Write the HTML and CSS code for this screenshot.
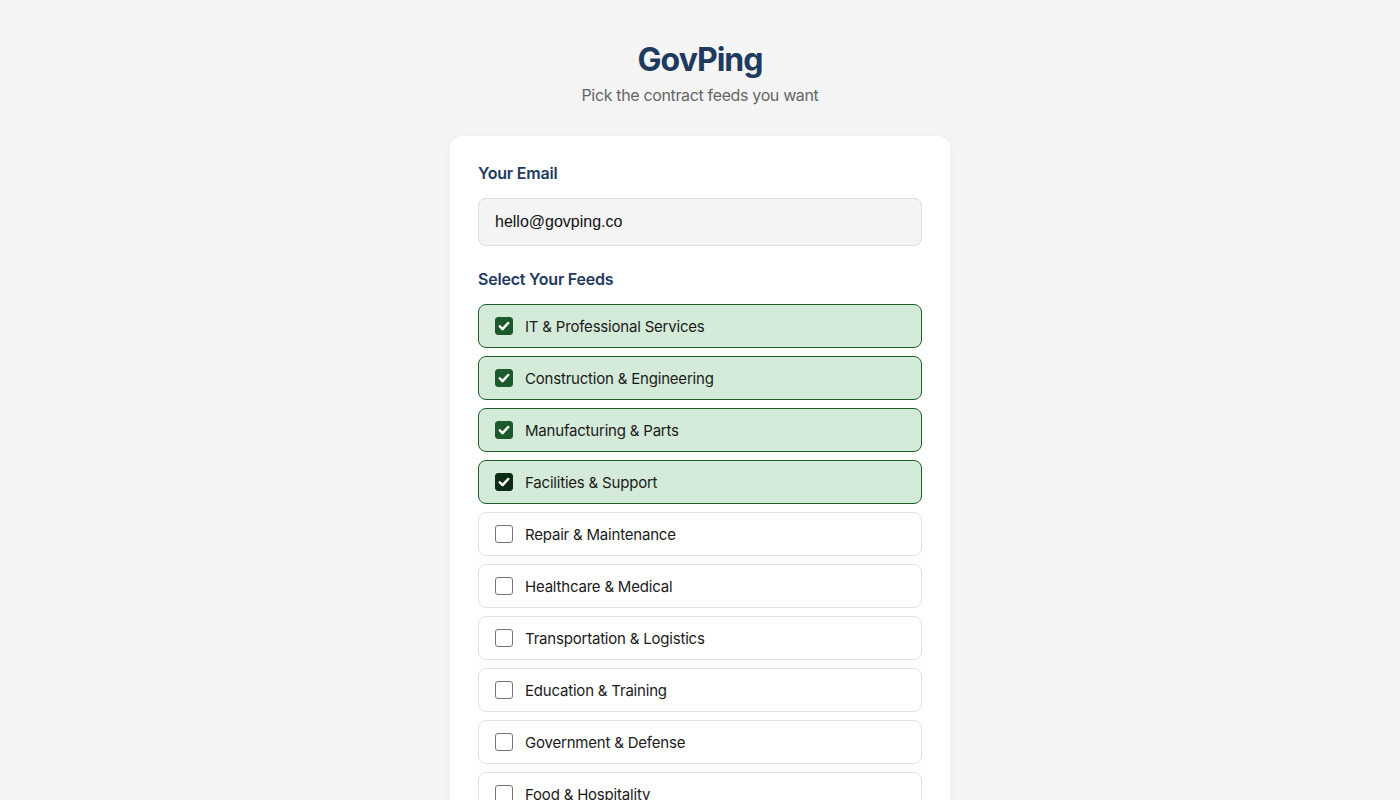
FILE: index.html
```html
<!DOCTYPE html>
<html lang="en">
<head>
<meta charset="utf-8">
<title>GovPing</title>
<link rel="stylesheet" href="styles.css">
</head>
<body>
<div class="page">
  <header class="hero">
    <h1 class="brand">GovPing</h1>
    <p class="tagline">Pick the contract feeds you want</p>
  </header>
  <main class="card">
    <label class="field-label" for="email">Your Email</label>
    <input class="email-input" id="email" type="email" value="hello@govping.co">
    <div class="field-label feeds-label">Select Your Feeds</div>
    <div class="feeds">
      <label class="feed checked"><span class="box"><svg viewBox="0 0 18 18"><path d="M4.3 9.4l3.1 3.1 6.3-6.9" fill="none" stroke="#fff" stroke-width="2.8" stroke-linecap="round" stroke-linejoin="round"/></svg></span><span class="feed-name">IT &amp; Professional Services</span></label>
      <label class="feed checked"><span class="box"><svg viewBox="0 0 18 18"><path d="M4.3 9.4l3.1 3.1 6.3-6.9" fill="none" stroke="#fff" stroke-width="2.8" stroke-linecap="round" stroke-linejoin="round"/></svg></span><span class="feed-name">Construction &amp; Engineering</span></label>
      <label class="feed checked"><span class="box"><svg viewBox="0 0 18 18"><path d="M4.3 9.4l3.1 3.1 6.3-6.9" fill="none" stroke="#fff" stroke-width="2.8" stroke-linecap="round" stroke-linejoin="round"/></svg></span><span class="feed-name">Manufacturing &amp; Parts</span></label>
      <label class="feed checked active"><span class="box"><svg viewBox="0 0 18 18"><path d="M4.3 9.4l3.1 3.1 6.3-6.9" fill="none" stroke="#fff" stroke-width="2.8" stroke-linecap="round" stroke-linejoin="round"/></svg></span><span class="feed-name">Facilities &amp; Support</span></label>
      <label class="feed"><span class="box"></span><span class="feed-name">Repair &amp; Maintenance</span></label>
      <label class="feed"><span class="box"></span><span class="feed-name">Healthcare &amp; Medical</span></label>
      <label class="feed"><span class="box"></span><span class="feed-name">Transportation &amp; Logistics</span></label>
      <label class="feed"><span class="box"></span><span class="feed-name">Education &amp; Training</span></label>
      <label class="feed"><span class="box"></span><span class="feed-name">Government &amp; Defense</span></label>
      <label class="feed"><span class="box"></span><span class="feed-name">Food &amp; Hospitality</span></label>
    </div>
  </main>
</div>
</body>
</html>
```

FILE: styles.css
```css
* { box-sizing: border-box; }
html, body { margin: 0; padding: 0; }
body {
  background: #f4f4f4;
  font-family: Inter, "Noto Sans", "Liberation Sans", sans-serif;
  color: #1a1a1a;
}
.page {
  display: flex;
  flex-direction: column;
  align-items: center;
  padding-top: 40px;
}
.hero { text-align: center; }
.brand {
  margin: 0;
  font-size: 32px;
  line-height: 40px;
  font-weight: 700;
  letter-spacing: -1px;
  color: #1e3a5f;
}
.tagline {
  margin: 5px 0 0;
  font-size: 16px;
  line-height: 20px;
  letter-spacing: -0.35px;
  color: #666;
}
.card {
  margin-top: 31px;
  width: 500px;
  background: #fff;
  border-radius: 12px;
  padding: 28px 28px 28px;
  display: flex;
  flex-direction: column;
  box-shadow: 0 2px 8px rgba(0,0,0,0.04);
}
.field-label {
  display: block;
  font-size: 16px;
  line-height: 18px;
  font-weight: 600;
  letter-spacing: -0.2px;
  color: #1e3a5f;
  margin-bottom: 16px;
}
.email-input {
  width: 100%;
  height: 48px;
  padding: 0 16px;
  border: 1px solid #dcdcdc;
  border-radius: 8px;
  background: #f4f4f4;
  font-family: "Liberation Sans", Arial, sans-serif;
  font-size: 16px;
  color: #111;
  outline: none;
}
.feeds-label { margin-top: 24px; }
.feeds {
  display: flex;
  flex-direction: column;
  gap: 8px;
}
.feed {
  display: flex;
  align-items: center;
  gap: 12px;
  height: 44px;
  padding: 0 16px;
  border: 1px solid #e2e2e2;
  border-radius: 8px;
  background: #fff;
  font-size: 15px;
  letter-spacing: -0.2px;
  color: #1a1a1a;
}
.box {
  width: 18px;
  height: 18px;
  flex: none;
  border: 1px solid #767676;
  border-radius: 3px;
  background: #fff;
  display: flex;
}
.box svg { width: 100%; height: 100%; }
.feed.checked {
  background: #d4ebd9;
  border-color: #1b5e2a;
}
.feed.checked .box {
  background: #1b5a2b;
  border-color: #1b5a2b;
}
.feed.checked.active .box {
  background: #0d2b14;
  border-color: #0d2b14;
}
```
